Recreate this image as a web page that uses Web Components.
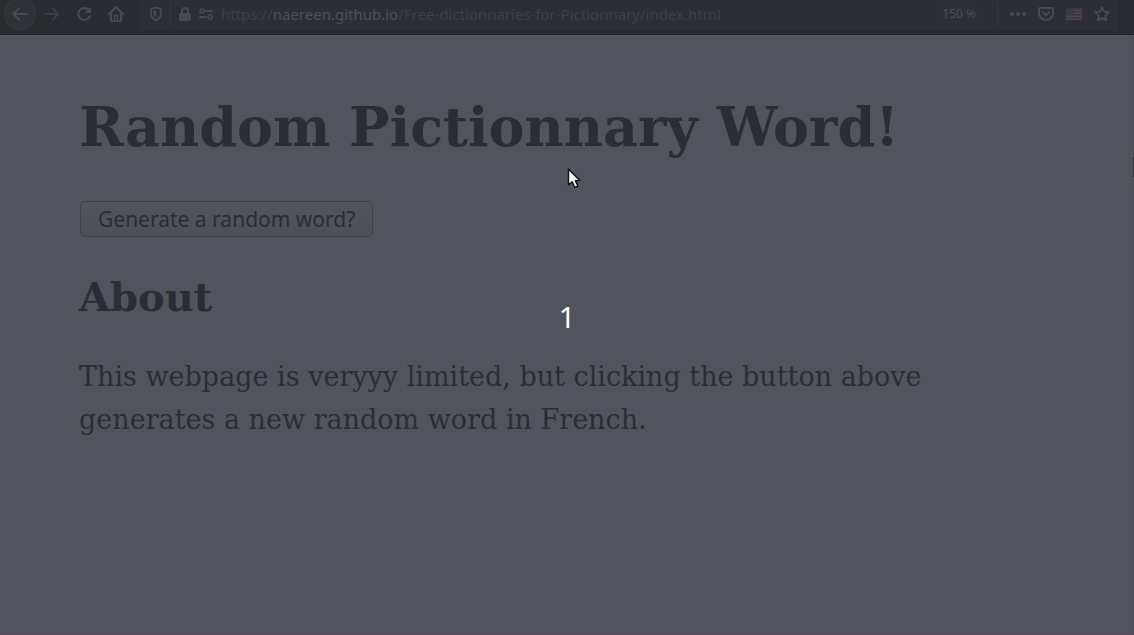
<!DOCTYPE html>
<html lang="en">
<head>
<meta charset="utf-8">
<title>Random Pictionnary Word!</title>
<style>
html, body { height: 100%; }
body { margin: 0; background: #51545c; --ink: #2a2d33; --icon: #474a52; }
</style>
</head>
<body>
<app-window>
  <browser-bar slot="bar"></browser-bar>
  <word-page heading="Random Pictionnary Word!">
    <word-button slot="action">Generate a random word?</word-button>
    <about-section heading="About">This webpage is veryyy limited, but clicking the button above generates a new random word in French.</about-section>
  </word-page>
  <count-down slot="overlay">1</count-down>
</app-window>
<script>
const define = (name, html) => customElements.define(name, class extends HTMLElement {
  constructor() {
    super();
    const t = document.createElement('template');
    t.innerHTML = html;
    this.attachShadow({ mode: 'open' }).append(t.content.cloneNode(true));
  }
  connectedCallback() {
    const h = this.shadowRoot.querySelector('[data-heading]');
    if (h) h.textContent = this.getAttribute('heading');
  }
});

define('app-window', `
<style>
:host { display: flex; flex-direction: column; min-height: 100%; box-sizing: border-box; position: relative; border-bottom: 1px solid #4e4a57; overflow: hidden; }
main { flex: 1; border-right: 1px solid #4a4d55; }
.pointer { position: absolute; left: 50%; top: 167px; display: block; }
.thumb { position: absolute; right: 0; top: 157px; width: 1px; height: 20px; background: #35343b; }
</style>
<slot name="bar"></slot>
<main><slot></slot></main>
<div class="thumb"></div>
<svg class="pointer" width="14" height="22" viewBox="0 0 14 22" aria-hidden="true"><path d="M1.5 2v16l3.7-3.3 2.5 5.8 3.2-1.4-2.5-5.5h4.4z" fill="#f4f3f1" stroke="#111216" stroke-width="1.4" stroke-linejoin="round"/></svg>
<slot name="overlay"></slot>`);

define('count-down', `
<style>
:host { position: absolute; inset: 0; display: flex; align-items: center; justify-content: center; pointer-events: none; font: 29px/36px "Noto Sans", sans-serif; color: #fff; }
</style>
<slot></slot>`);

define('icon-button', `
<style>
:host { display: flex; flex: none; color: var(--icon); }
:host(.dim) { color: #393c42; }
button { all: unset; display: flex; align-items: center; justify-content: center; width: var(--w, 32px); height: var(--h, 28px); border-radius: 50%; background: var(--fill, none); box-shadow: var(--ring, none); }
</style>
<button><slot></slot></button>`);

define('browser-bar', `
<style>
:host { display: flex; align-items: flex-start; box-sizing: border-box; height: 35px; padding-left: 4px; background: #292c31; border-bottom: 1px solid #202328; font-family: "Noto Sans", sans-serif; color: var(--icon); }
nav { display: flex; height: 28px; }
svg { display: block; fill: none; stroke: currentColor; stroke-width: 2; stroke-linecap: round; stroke-linejoin: round; }
.back { --w: 32px; --h: 32px; --fill: #303136; --ring: inset 0 0 0 1px #36373b; margin-top: -2px; }
.field { flex: 1; min-width: 0; display: flex; align-items: center; height: 29px; box-sizing: border-box; margin: 0 17px 0 9px; background: #2b2e35; border: 1px solid #303237; border-top: 0; }
.rule { width: 1px; height: 24px; background: #34363b; }
.shield { --w: 28px; }
.lock { --w: 28px; }
.perm { --w: 14px; }
.url { flex: 1; min-width: 0; margin-left: 8px; font-size: 15px; line-height: 20px; white-space: nowrap; overflow: hidden; color: #3c3f46; outline: 0; }
.url span { color: #4c5059; }
.zoom { all: unset; box-sizing: border-box; padding: 0 8px; border-radius: 8px; margin-right: 12px; font-size: 12px; line-height: 16px; color: #4a4e56; background: #2c2f36; border: 1px dotted #313339; }
.tool { --w: 28px; }
.tools { display: flex; margin: 0 0 0 6px; }
</style>
<nav aria-label="Navigation">
  <icon-button class="back"><svg width="16" height="16" viewBox="0 0 16 16" role="img" aria-label="Back"><path d="M15 8H1.500M7 2.500L1.500 8 7 13.500"/></svg></icon-button>
  <icon-button class="dim"><svg width="16" height="16" viewBox="0 0 16 16" role="img" aria-label="Forward"><path d="M1 8h13.500M9 2.500L14.500 8 9 13.500"/></svg></icon-button>
  <icon-button><svg width="16" height="16" viewBox="0 0 16 16" role="img" aria-label="Reload"><path d="M12.900 4A6 6 0 1 0 14 10"/><path d="M15 1v6H9z" fill="currentColor" stroke="none"/></svg></icon-button>
  <icon-button><svg width="18" height="16" viewBox="0 0 18 16" role="img" aria-label="Home"><path d="M1.500 8.500L9 1l7.500 7.500M4 7v8h10V7"/><path d="M7.500 14V9.500h3V14" stroke-width="1.500"/></svg></icon-button>
</nav>
<div class="field">
  <icon-button class="shield"><svg width="14" height="16" viewBox="0 0 14 16" role="img" aria-label="Tracking protection"><path d="M7 1.500l5 1.500v4.500c0 3-2 5.500-5 7-3-1.500-5-4-5-7V3z" stroke-width="1.800"/><path d="M7 4.500v7C5.300 10.300 4.500 9 4.500 7.300V5.200z" fill="currentColor" stroke="none"/></svg></icon-button>
  <div class="rule"></div>
  <icon-button class="lock"><svg width="12" height="14" viewBox="0 0 12 14" role="img" aria-label="Secure connection"><path d="M3 7V4a3 3 0 0 1 6 0v3"/><rect x="0" y="6" width="12" height="8" rx="1" fill="currentColor" stroke="none"/></svg></icon-button>
  <icon-button class="perm"><svg width="14" height="12" viewBox="0 0 14 12" role="img" aria-label="Permissions"><circle cx="3" cy="3" r="2" stroke-width="1.600"/><path d="M7 3h6M1 9h5.500" stroke-width="1.800"/><circle cx="11" cy="9" r="2" stroke-width="1.600"/></svg></icon-button>
  <div class="url" role="textbox" contenteditable="true" spellcheck="false" aria-label="Address">https://<span>naereen.github.io</span>/Free-dictionnaries-for-Pictionnary/index.html</div>
  <button class="zoom">150 %</button>
  <div class="rule"></div>
  <div class="tools">
    <icon-button class="tool"><svg width="18" height="6" viewBox="0 0 18 6" role="img" aria-label="Page actions"><path d="M3 3h.01M9 3h.01M15 3h.01" stroke-width="4"/></svg></icon-button>
    <icon-button class="tool"><svg width="16" height="14" viewBox="0 0 16 14" role="img" aria-label="Pocket"><path d="M2 1h12q1 0 1 1v4a7 7 0 0 1-14 0V2q0-1 1-1z"/><path d="M4.800 5L8 8.200 11.200 5"/></svg></icon-button>
    <icon-button class="tool"><svg width="16" height="12" viewBox="0 0 16 12" role="img" aria-label="English (US)"><g stroke="none"><path d="M0 0h16v12H0z" fill="#4c484e"/><path d="M0 0h16v1.500H0zM0 3h16v1.500H0zM0 6h16v1.500H0zM0 9h16v1.500H0z" fill="#47323a"/><path d="M0 0h8v7H0z" fill="#32384a"/></g><path d="M1.500 1.500h.01M4 1.500h.01M6.500 1.500h.01M2.700 3.500h.01M5.200 3.500h.01M1.500 5.500h.01M4 5.500h.01M6.500 5.500h.01" stroke="#4a4e58" stroke-width=".8"/></svg></icon-button>
    <icon-button class="tool"><svg width="16" height="16" viewBox="0 0 16 16" role="img" aria-label="Bookmark this page"><path d="M8 1.200l2 4.500 4.900.5-3.700 3.300 1.100 4.900L8 11.900l-4.300 2.500 1.100-4.900L1.100 6.200 6 5.700z" stroke-width="1.800"/></svg></icon-button>
  </div>
</div>`);

define('word-page', `
<style>
:host { display: block; padding: 60px 79px 40px; font-family: "DejaVu Serif", serif; color: var(--ink); }
h1 { margin: 0 0 42px; font-size: 54px; line-height: 64px; font-weight: bold; }
</style>
<h1 data-heading></h1>
<slot name="action"></slot>
<slot></slot>`);

define('word-button', `
<style>
:host { display: flex; margin: 0 1px; }
button { box-sizing: border-box; height: 36px; padding: 0 17px; border: 1px solid #3e4147; border-radius: 5px; background: linear-gradient(#52545b, #4e5056); font: 21px/32px "Noto Sans", sans-serif; color: var(--ink); }
</style>
<button><slot></slot></button>`);

define('about-section', `
<style>
:host { display: block; margin-top: 36px; }
h2 { margin: 0 0 34px; font-size: 40px; line-height: 48px; font-weight: bold; }
p { margin: 0; max-width: 880px; font-size: 27px; line-height: 43px; }
</style>
<h2 data-heading></h2>
<p><slot></slot></p>`);
</script>
</body>
</html>
